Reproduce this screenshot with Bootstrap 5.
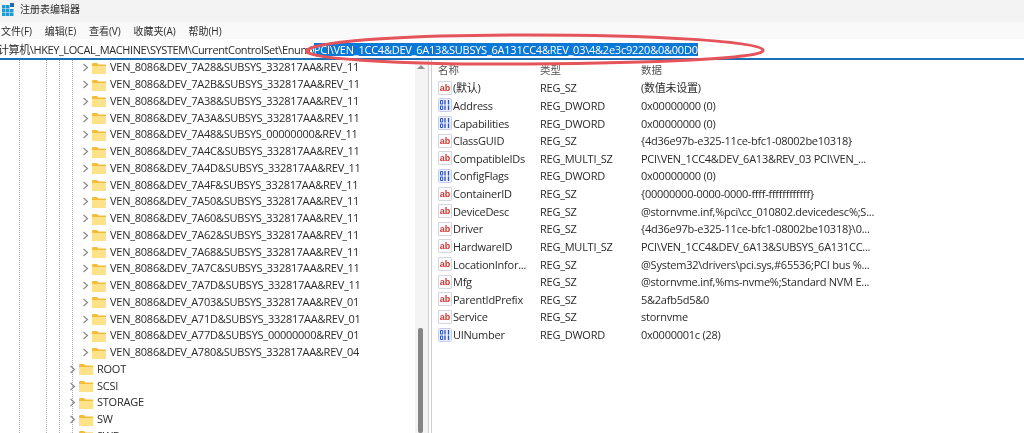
<!DOCTYPE html>
<html lang="zh-CN">
<head>
<meta charset="utf-8">
<title>注册表编辑器</title>
<link href="https://cdn.jsdelivr.net/npm/bootstrap@5.3.0/dist/css/bootstrap.min.css" rel="stylesheet">
<style>
html,body{height:433px;overflow:hidden;background:#fff}
body{font-family:"Open Sans","Noto Sans CJK SC",sans-serif;font-size:11px;color:#2b2b2b;line-height:1;letter-spacing:-.25px}
.app{height:433px;position:relative;filter:blur(.3px)}
.titlebar{height:22px;background:#f3f3f3;padding:0 0 5px 2px;gap:5px;font-size:10px;letter-spacing:0}
.menubar{height:17px;background:#f9f9f9;font-size:10px;padding-left:1px;gap:12.7px;letter-spacing:0}
.addr{height:20px;margin-top:1px;background:#fff;border-bottom:2px solid #1a6fb5;white-space:nowrap;overflow:hidden}
.addr .lead-path{margin-left:-2px;letter-spacing:-.4px}
.addr .sel{background:#0a78d7;color:#fff;padding:1px 0;letter-spacing:-.23px}
.panes{height:373px;overflow:hidden}
.treepane{width:415px;flex:none;overflow:hidden;position:relative}
.guide{position:absolute;top:0;bottom:0;border-left:1px dotted #aaa}
.g1{left:19px}.g2{left:46px}.g3{left:59px}.g4{left:72px}
.treerow{height:16.76px;white-space:nowrap}
.treerow>span{padding-bottom:2px}
.lv4{padding-left:82px}
.lv3{padding-left:69px}
.chev{width:7px;height:9px;margin-right:3px;flex:none}
.fold{width:14px;height:12px;margin-right:4px;flex:none}
.treebox{margin-top:-.5px;position:relative}
.scrolltrack{width:13px;flex:none;background:#f4f4f4;position:relative}
.scrollthumb{position:absolute;left:3px;width:5px;top:268px;bottom:0;background:#858585;border-radius:2px}
.scrollup{position:absolute;left:2px;top:5px;width:0;height:0;border-left:4px solid transparent;border-right:4px solid transparent;border-bottom:4px solid #8f8f8f}
.split{width:4px;flex:none;border-left:1px solid #cfcfcf;border-right:1px solid #cfcfcf}
.listpane{flex:1;padding-left:6px}
.lhead{height:19px;padding-top:1px;color:#555;font-size:10.5px;letter-spacing:0}
.c1{width:102px;flex:none}.c2{width:101px;flex:none}.c3{flex:none}
.lrow{height:17.64px;white-space:nowrap}
.vicon{width:14px;height:14px;margin-right:1px;flex:none}
.abicon{width:14px;height:14px;margin-right:1px;flex:none;background:#fbfbfd;border:1px solid #d6d6de;border-radius:1px;color:#d2352b;font:700 9px "Liberation Sans",sans-serif;letter-spacing:0}
.oval{position:absolute;left:298px;top:32px;width:468px;height:36px;pointer-events:none}
</style>
</head>
<body>
<svg width="0" height="0" class="d-block" style="position:absolute">
<symbol id="chev" viewBox="0 0 7 9"><path d="M1.500 1 5.500 4.500 1.500 8" fill="none" stroke="#8a8a8a" stroke-width="1.2"/></symbol>
<symbol id="fold" viewBox="0 0 14 12"><path d="M0 2a1 1 0 0 1 1-1h4l1.500 1.500H14V11a1 1 0 0 1-1 1H1a1 1 0 0 1-1-1z" fill="#f3bd3a"/><path d="M0 4h14V11a1 1 0 0 1-1 1H1a1 1 0 0 1-1-1z" fill="#fde28a"/></symbol>
<symbol id="bin" viewBox="0 0 14 14"><rect x=".5" y=".5" width="13" height="13" rx="1" fill="#eef0fb" stroke="#c8cce8"/><path d="M2.500 2.500h2.200v3.500H2.500zM2.500 8h2.200v3.500H2.500z" fill="none" stroke="#2a4fc0"/><path d="M7 2v4.500M10.500 2v4.500M7 7.500V12M10.500 7.500V12" stroke="#2a4fc0" stroke-width="1.300" fill="none"/></symbol>
</svg>
<div class="app d-flex flex-column">
  <div class="titlebar d-flex align-items-center">
    <svg width="13" height="14" viewBox="0 0 13 14"><path d="M0 3h3.500v3.500H0zM4 3h3.500v3.500H4zM0 7h3.500v3.500H0zM4 7h3.500v3.500H4zM8 7h3.500v3.500H8zM0 11h3.500v3H0zM4 11h3.500v3H4zM8 11h3.500v3H8z" fill="#2396cf"/><path d="M8 1h4v4H8z" fill="#1d6ea8"/></svg>
    <span>注册表编辑器</span>
  </div>
  <div class="menubar d-flex align-items-center">
    <span>文件(F)</span><span>编辑(E)</span><span>查看(V)</span><span>收藏夹(A)</span><span>帮助(H)</span>
  </div>
  <div class="addr d-flex align-items-center">
    <span class="lead-path">计算机\HKEY_LOCAL_MACHINE\SYSTEM\CurrentControlSet\Enum\</span><span class="sel">PCI\VEN_1CC4&amp;DEV_6A13&amp;SUBSYS_6A131CC4&amp;REV_03\4&amp;2e3c9220&amp;0&amp;00D0</span>
  </div>
  <div class="panes d-flex">
    <div class="treepane">
      <i class="guide g1"></i><i class="guide g2"></i><i class="guide g3"></i><i class="guide g4"></i>
      <div class="treebox" id="tree">
        <div class="treerow d-flex align-items-center lv4"><svg class="chev"><use href="#chev"/></svg><svg class="fold"><use href="#fold"/></svg><span>VEN_8086&amp;DEV_7A28&amp;SUBSYS_332817AA&amp;REV_11</span></div>
        <div class="treerow d-flex align-items-center lv4"><svg class="chev"><use href="#chev"/></svg><svg class="fold"><use href="#fold"/></svg><span>VEN_8086&amp;DEV_7A2B&amp;SUBSYS_332817AA&amp;REV_11</span></div>
        <div class="treerow d-flex align-items-center lv4"><svg class="chev"><use href="#chev"/></svg><svg class="fold"><use href="#fold"/></svg><span>VEN_8086&amp;DEV_7A38&amp;SUBSYS_332817AA&amp;REV_11</span></div>
        <div class="treerow d-flex align-items-center lv4"><svg class="chev"><use href="#chev"/></svg><svg class="fold"><use href="#fold"/></svg><span>VEN_8086&amp;DEV_7A3A&amp;SUBSYS_332817AA&amp;REV_11</span></div>
        <div class="treerow d-flex align-items-center lv4"><svg class="chev"><use href="#chev"/></svg><svg class="fold"><use href="#fold"/></svg><span>VEN_8086&amp;DEV_7A48&amp;SUBSYS_00000000&amp;REV_11</span></div>
        <div class="treerow d-flex align-items-center lv4"><svg class="chev"><use href="#chev"/></svg><svg class="fold"><use href="#fold"/></svg><span>VEN_8086&amp;DEV_7A4C&amp;SUBSYS_332817AA&amp;REV_11</span></div>
        <div class="treerow d-flex align-items-center lv4"><svg class="chev"><use href="#chev"/></svg><svg class="fold"><use href="#fold"/></svg><span>VEN_8086&amp;DEV_7A4D&amp;SUBSYS_332817AA&amp;REV_11</span></div>
        <div class="treerow d-flex align-items-center lv4"><svg class="chev"><use href="#chev"/></svg><svg class="fold"><use href="#fold"/></svg><span>VEN_8086&amp;DEV_7A4F&amp;SUBSYS_332817AA&amp;REV_11</span></div>
        <div class="treerow d-flex align-items-center lv4"><svg class="chev"><use href="#chev"/></svg><svg class="fold"><use href="#fold"/></svg><span>VEN_8086&amp;DEV_7A50&amp;SUBSYS_332817AA&amp;REV_11</span></div>
        <div class="treerow d-flex align-items-center lv4"><svg class="chev"><use href="#chev"/></svg><svg class="fold"><use href="#fold"/></svg><span>VEN_8086&amp;DEV_7A60&amp;SUBSYS_332817AA&amp;REV_11</span></div>
        <div class="treerow d-flex align-items-center lv4"><svg class="chev"><use href="#chev"/></svg><svg class="fold"><use href="#fold"/></svg><span>VEN_8086&amp;DEV_7A62&amp;SUBSYS_332817AA&amp;REV_11</span></div>
        <div class="treerow d-flex align-items-center lv4"><svg class="chev"><use href="#chev"/></svg><svg class="fold"><use href="#fold"/></svg><span>VEN_8086&amp;DEV_7A68&amp;SUBSYS_332817AA&amp;REV_11</span></div>
        <div class="treerow d-flex align-items-center lv4"><svg class="chev"><use href="#chev"/></svg><svg class="fold"><use href="#fold"/></svg><span>VEN_8086&amp;DEV_7A7C&amp;SUBSYS_332817AA&amp;REV_11</span></div>
        <div class="treerow d-flex align-items-center lv4"><svg class="chev"><use href="#chev"/></svg><svg class="fold"><use href="#fold"/></svg><span>VEN_8086&amp;DEV_7A7D&amp;SUBSYS_332817AA&amp;REV_11</span></div>
        <div class="treerow d-flex align-items-center lv4"><svg class="chev"><use href="#chev"/></svg><svg class="fold"><use href="#fold"/></svg><span>VEN_8086&amp;DEV_A703&amp;SUBSYS_332817AA&amp;REV_01</span></div>
        <div class="treerow d-flex align-items-center lv4"><svg class="chev"><use href="#chev"/></svg><svg class="fold"><use href="#fold"/></svg><span>VEN_8086&amp;DEV_A71D&amp;SUBSYS_332817AA&amp;REV_01</span></div>
        <div class="treerow d-flex align-items-center lv4"><svg class="chev"><use href="#chev"/></svg><svg class="fold"><use href="#fold"/></svg><span>VEN_8086&amp;DEV_A77D&amp;SUBSYS_00000000&amp;REV_01</span></div>
        <div class="treerow d-flex align-items-center lv4"><svg class="chev"><use href="#chev"/></svg><svg class="fold"><use href="#fold"/></svg><span>VEN_8086&amp;DEV_A780&amp;SUBSYS_332817AA&amp;REV_04</span></div>
        <div class="treerow d-flex align-items-center lv3"><svg class="chev"><use href="#chev"/></svg><svg class="fold"><use href="#fold"/></svg><span>ROOT</span></div>
        <div class="treerow d-flex align-items-center lv3"><svg class="chev"><use href="#chev"/></svg><svg class="fold"><use href="#fold"/></svg><span>SCSI</span></div>
        <div class="treerow d-flex align-items-center lv3"><svg class="chev"><use href="#chev"/></svg><svg class="fold"><use href="#fold"/></svg><span>STORAGE</span></div>
        <div class="treerow d-flex align-items-center lv3"><svg class="chev"><use href="#chev"/></svg><svg class="fold"><use href="#fold"/></svg><span>SW</span></div>
        <div class="treerow d-flex align-items-center lv3"><svg class="chev"><use href="#chev"/></svg><svg class="fold"><use href="#fold"/></svg><span>SWD</span></div>
      </div>
    </div>
    <div class="scrolltrack"><i class="scrollup"></i><i class="scrollthumb"></i></div>
    <div class="split"></div>
    <div class="listpane">
      <div class="lhead d-flex align-items-center"><span class="c1">名称</span><span class="c2">类型</span><span class="c3">数据</span></div>
      <div class="lrow d-flex align-items-center"><span class="c1 d-flex align-items-center"><span class="abicon d-flex align-items-center justify-content-center">ab</span>(默认)</span><span class="c2">REG_SZ</span><span class="c3">(数值未设置)</span></div>
      <div class="lrow d-flex align-items-center"><span class="c1 d-flex align-items-center"><svg class="vicon"><use href="#bin"/></svg>Address</span><span class="c2">REG_DWORD</span><span class="c3">0x00000000 (0)</span></div>
      <div class="lrow d-flex align-items-center"><span class="c1 d-flex align-items-center"><svg class="vicon"><use href="#bin"/></svg>Capabilities</span><span class="c2">REG_DWORD</span><span class="c3">0x00000000 (0)</span></div>
      <div class="lrow d-flex align-items-center"><span class="c1 d-flex align-items-center"><span class="abicon d-flex align-items-center justify-content-center">ab</span>ClassGUID</span><span class="c2">REG_SZ</span><span class="c3">{4d36e97b-e325-11ce-bfc1-08002be10318}</span></div>
      <div class="lrow d-flex align-items-center"><span class="c1 d-flex align-items-center"><span class="abicon d-flex align-items-center justify-content-center">ab</span>CompatibleIDs</span><span class="c2">REG_MULTI_SZ</span><span class="c3">PCI\VEN_1CC4&amp;DEV_6A13&amp;REV_03 PCI\VEN_...</span></div>
      <div class="lrow d-flex align-items-center"><span class="c1 d-flex align-items-center"><svg class="vicon"><use href="#bin"/></svg>ConfigFlags</span><span class="c2">REG_DWORD</span><span class="c3">0x00000000 (0)</span></div>
      <div class="lrow d-flex align-items-center"><span class="c1 d-flex align-items-center"><span class="abicon d-flex align-items-center justify-content-center">ab</span>ContainerID</span><span class="c2">REG_SZ</span><span class="c3">{00000000-0000-0000-ffff-ffffffffffff}</span></div>
      <div class="lrow d-flex align-items-center"><span class="c1 d-flex align-items-center"><span class="abicon d-flex align-items-center justify-content-center">ab</span>DeviceDesc</span><span class="c2">REG_SZ</span><span class="c3">@stornvme.inf,%pci\cc_010802.devicedesc%;S...</span></div>
      <div class="lrow d-flex align-items-center"><span class="c1 d-flex align-items-center"><span class="abicon d-flex align-items-center justify-content-center">ab</span>Driver</span><span class="c2">REG_SZ</span><span class="c3">{4d36e97b-e325-11ce-bfc1-08002be10318}\0...</span></div>
      <div class="lrow d-flex align-items-center"><span class="c1 d-flex align-items-center"><span class="abicon d-flex align-items-center justify-content-center">ab</span>HardwareID</span><span class="c2">REG_MULTI_SZ</span><span class="c3">PCI\VEN_1CC4&amp;DEV_6A13&amp;SUBSYS_6A131CC...</span></div>
      <div class="lrow d-flex align-items-center"><span class="c1 d-flex align-items-center"><span class="abicon d-flex align-items-center justify-content-center">ab</span>LocationInfor...</span><span class="c2">REG_SZ</span><span class="c3">@System32\drivers\pci.sys,#65536;PCI bus %...</span></div>
      <div class="lrow d-flex align-items-center"><span class="c1 d-flex align-items-center"><span class="abicon d-flex align-items-center justify-content-center">ab</span>Mfg</span><span class="c2">REG_SZ</span><span class="c3">@stornvme.inf,%ms-nvme%;Standard NVM E...</span></div>
      <div class="lrow d-flex align-items-center"><span class="c1 d-flex align-items-center"><span class="abicon d-flex align-items-center justify-content-center">ab</span>ParentIdPrefix</span><span class="c2">REG_SZ</span><span class="c3">5&amp;2afb5d5&amp;0</span></div>
      <div class="lrow d-flex align-items-center"><span class="c1 d-flex align-items-center"><span class="abicon d-flex align-items-center justify-content-center">ab</span>Service</span><span class="c2">REG_SZ</span><span class="c3">stornvme</span></div>
      <div class="lrow d-flex align-items-center"><span class="c1 d-flex align-items-center"><svg class="vicon"><use href="#bin"/></svg>UINumber</span><span class="c2">REG_DWORD</span><span class="c3">0x0000001c (28)</span></div>
    </div>
  </div>
  <svg class="oval" viewBox="0 0 468 36"><path d="M9 18C22 8 120 3 230 3c120 0 232 6 235 15 3 9-115 13-235 14C110 33 0 27 9 18" fill="none" stroke="#e5545a" stroke-width="3"/></svg>
</div>
</body>
</html>
